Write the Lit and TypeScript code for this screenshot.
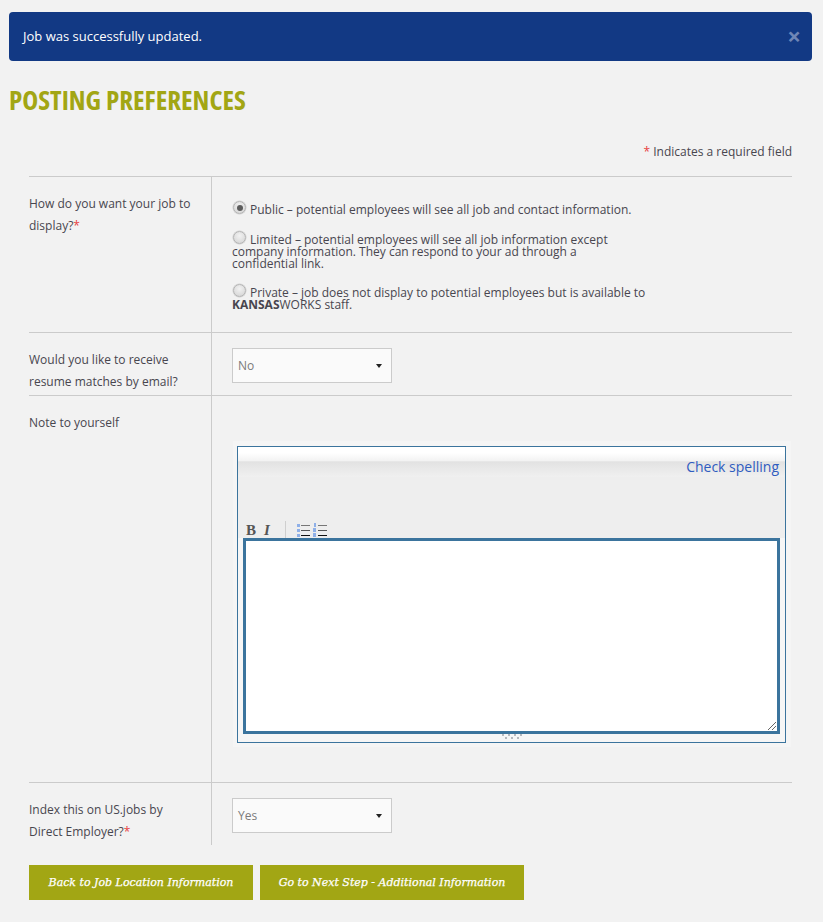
import { LitElement, html, css } from "lit";
import { customElement } from "lit/decorators.js";

@customElement("app-root")
export class AppRoot extends LitElement {
  static styles = css`
    :host {
      display: block;
      min-height: 100vh;
      box-sizing: border-box;
      background: #f2f2f2;
      padding: 12px 11px 0 9px;
      font-family: "Open Sans", sans-serif;
      font-size: 12px;
      color: #48464f;
    }
    .alert {
      height: 49px;
      box-sizing: border-box;
      background: #123984;
      border-radius: 4px;
      color: #fff;
      font-size: 13px;
      padding: 0 11px 2px 14px;
      display: flex;
      align-items: center;
      justify-content: space-between;
    }
    .close {
      color: #6f86b6;
      font-size: 24px;
      font-weight: 700;
      line-height: 20px;
    }
    h1 {
      margin: 21px 0 0;
      color: #a2a614;
      font-size: 27px;
      line-height: 36px;
      font-weight: 700;
      font-stretch: 75%;
      text-transform: uppercase;
      white-space: nowrap;
    }
    .form {
      margin: 0 20px 0 20px;
    }
    .req-note {
      margin-top: 25px;
      height: 33px;
      line-height: 18px;
      text-align: right;
      font-size: 12px;
    }
    .star {
      color: #e8403f;
    }
    .row {
      display: grid;
      grid-template-columns: 182px 1fr;
      border-top: 1px solid #cbcbcb;
    }
    .label {
      font-size: 12px;
      line-height: 21.6px;
      padding: 16px 17px 0 0;
    }
    .field {
      border-left: 1px solid #cbcbcb;
      padding-left: 20px;
    }
    .r1 {
      height: 155px;
    }
    .r2 {
      height: 62px;
    }
    .r3 {
      height: 386px;
    }
    .r4 {
      height: 62px;
    }
    .radios {
      padding-top: 24px;
      width: 420px;
      font-size: 12px;
      line-height: 12px;
    }
    .radios p {
      margin: 0 0 15px;
    }
    .radios p.tight {
      margin-bottom: 14px;
    }
    .radio {
      display: inline-block;
      width: 13px;
      height: 13px;
      box-sizing: border-box;
      border: 1px solid #b4b4b4;
      border-radius: 50%;
      background: radial-gradient(circle at 50% 35%, #f2f2f2, #d2d2d2);
      margin: 0 4px 0 1px;
      vertical-align: 0;
      position: relative;
      box-shadow: 0 0 0 0.5px #d0d0d0;
    }
    .radio.on::after {
      content: "";
      position: absolute;
      left: 2.5px;
      top: 2.5px;
      width: 6px;
      height: 6px;
      border-radius: 50%;
      background: #5c5c5c;
    }
    b {
      font-weight: 700;
    }
    .select {
      margin-top: 15px;
      width: 160px;
      height: 35px;
      box-sizing: border-box;
      border: 1px solid #cbcbcb;
      background: #fafafa;
      color: #7b7b7b;
      font-size: 12px;
      padding: 0 9px 0 5px;
      display: flex;
      align-items: center;
      justify-content: space-between;
    }
    .arrow {
      width: 0;
      height: 0;
      border-left: 3.5px solid transparent;
      border-right: 3.5px solid transparent;
      border-top: 4px solid #222;
    }
    .halo {
      margin: 45px 0 0 1px;
      width: 558px;
      box-sizing: border-box;
      background: #f5f5f5;
      padding: 5px 5px 4px 4px;
    }
    .editor {
      height: 297px;
      box-sizing: border-box;
      border: 1px solid #3b749d;
      background: #f6f6f6;
      display: flex;
      flex-direction: column;
    }
    .ed-top {
      height: 30px;
      flex: none;
      background: linear-gradient(#fff 0, #fff 20%, #f2f2f2 47%, #e2e2e2 49%, #f0f0f0 100%);
      text-align: right;
      padding-right: 6px;
      box-sizing: border-box;
      font-size: 14px;
      line-height: 40px;
      color: #2f5cc0;
    }
    .toolbar {
      height: 61px;
      flex: none;
      box-sizing: border-box;
      background: #eeeeee;
      display: flex;
      align-items: flex-end;
      padding-left: 8px;
    }
    .tb {
      font-family: "Liberation Serif", serif;
      font-size: 15px;
      line-height: 15px;
      color: #555;
      font-weight: 700;
    }
    .tb.i {
      font-style: italic;
      margin-left: 8px;
    }
    .sep {
      width: 1px;
      height: 17px;
      background: #cfcfcf;
      margin: 0 11px 0 15px;
    }
    .lists {
      display: block;
    }
    .ta {
      height: 196px;
      flex: none;
      margin: 0 5px 0 5px;
      box-sizing: border-box;
      border: 3px solid #3b749d;
      background: #fff;
      position: relative;
    }
    .resize {
      position: absolute;
      right: 0;
      bottom: 0;
    }
    .grip {
      display: block;
      margin: 0 auto;
    }
    .buttons {
      display: flex;
      gap: 7px;
      margin-top: 20px;
    }
    .btn {
      height: 35px;
      display: flex;
      align-items: center;
      justify-content: center;
      background: #a2a614;
      color: #fff;
      font-family: "DejaVu Serif", serif;
      font-style: italic;
      font-weight: 400;
      -webkit-text-stroke: 0.25px #fff;
      font-size: 11px;
      white-space: nowrap;
    }
    .b1 {
      width: 224px;
    }
    .b2 {
      width: 264px;
    }
  `;

  render() {
    return html`
      <div class="alert"><span>Job was successfully updated.</span><span class="close">×</span></div>
      <h1>Posting Preferences</h1>
      <div class="form">
        <div class="req-note"><span class="star">*</span> Indicates a required field</div>
        <div class="row r1">
          <div class="label">How do you want your job to display?<span class="star">*</span></div>
          <div class="field">
            <div class="radios">
              <p><span class="radio on"></span>Public – potential employees will see all job and contact information.</p>
              <p class="tight"><span class="radio"></span>Limited – potential employees will see all job information except company information. They can respond to your ad through a<br />confidential link.</p>
              <p><span class="radio"></span>Private – job does not display to potential employees but is available to <b>KANSAS</b>WORKS staff.</p>
            </div>
          </div>
        </div>
        <div class="row r2">
          <div class="label">Would you like to receive resume matches by email?</div>
          <div class="field"><div class="select"><span>No</span><span class="arrow"></span></div></div>
        </div>
        <div class="row r3">
          <div class="label">Note to yourself</div>
          <div class="field">
            <div class="halo">
              <div class="editor">
                <div class="ed-top">Check spelling</div>
                <div class="toolbar">
                  <span class="tb">B</span>
                  <span class="tb i">I</span>
                  <span class="sep"></span>
                  <svg class="lists" width="31" height="15" viewBox="0 0 31 15">
                    <g fill="#8fb0e8">
                      <rect x="0" y="1" width="3" height="3" />
                      <rect x="0" y="6" width="3" height="3" />
                      <rect x="0" y="11" width="3" height="3" />
                      <rect x="17" y="0" width="2" height="4" />
                      <rect x="16" y="5" width="3" height="4" />
                      <rect x="16" y="10" width="3" height="4" />
                    </g>
                    <rect x="4" y="2" width="9" height="1" fill="#777" />
                    <rect x="4" y="7" width="9" height="1" fill="#555" />
                    <rect x="4" y="12" width="9" height="1" fill="#111" />
                    <rect x="21" y="2" width="9" height="1" fill="#777" />
                    <rect x="21" y="7" width="9" height="1" fill="#555" />
                    <rect x="21" y="12" width="9" height="1" fill="#111" />
                  </svg>
                </div>
                <div class="ta">
                  <svg class="resize" width="9" height="9" viewBox="0 0 9 9">
                    <path d="M0 8 L8 0 M4 8 L8 4" stroke="#666" stroke-width="1" fill="none" />
                  </svg>
                </div>
                <svg class="grip" width="20" height="5" viewBox="0 0 20 5">
                  <g fill="#b5b8bd">
                    <rect x="0" y="0" width="2" height="2" />
                    <rect x="6" y="0" width="2" height="2" />
                    <rect x="12" y="0" width="2" height="2" />
                    <rect x="18" y="0" width="2" height="2" />
                    <rect x="3" y="3" width="2" height="2" />
                    <rect x="9" y="3" width="2" height="2" />
                    <rect x="15" y="3" width="2" height="2" />
                  </g>
                </svg>
              </div>
            </div>
          </div>
        </div>
        <div class="row r4">
          <div class="label">Index this on US.jobs by Direct Employer?<span class="star">*</span></div>
          <div class="field"><div class="select"><span>Yes</span><span class="arrow"></span></div></div>
        </div>
        <div class="buttons">
          <div class="btn b1">Back to Job Location Information</div>
          <div class="btn b2">Go to Next Step - Additional Information</div>
        </div>
      </div>
    `;
  }
}
